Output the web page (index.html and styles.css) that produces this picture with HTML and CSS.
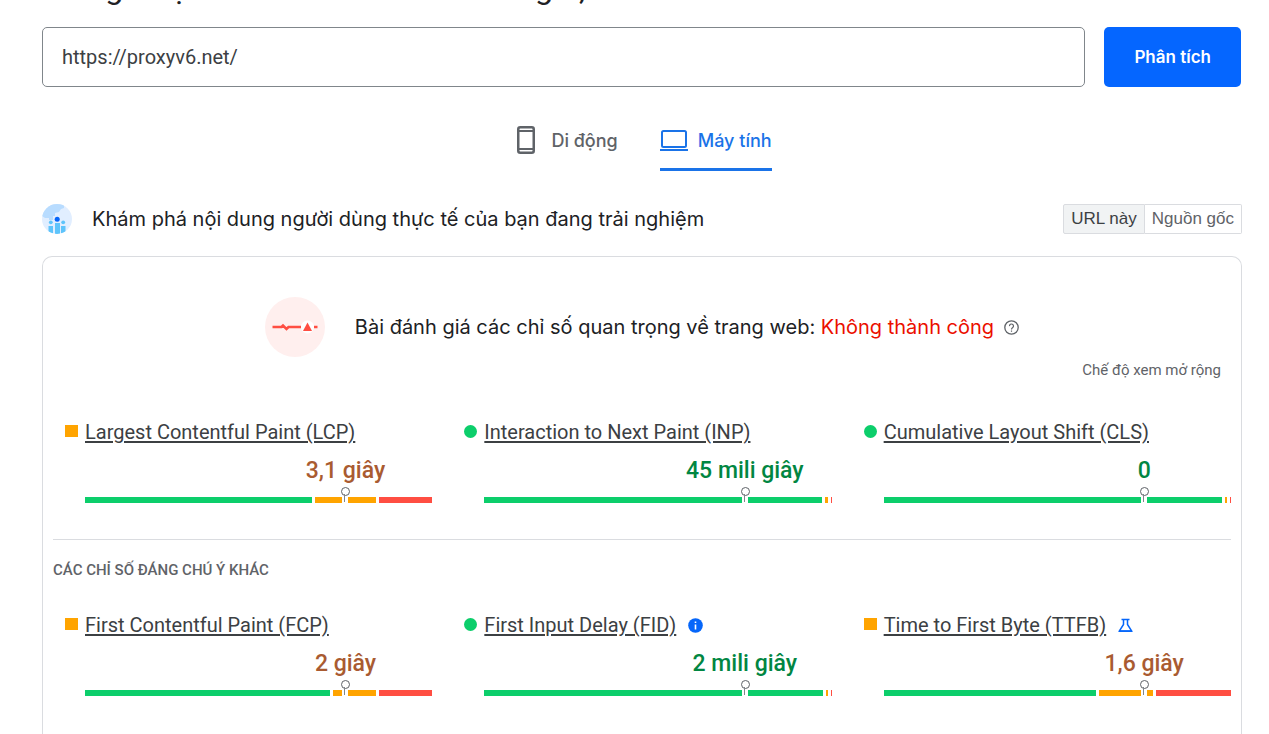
FILE: index.html
```html
<!DOCTYPE html>
<html lang="vi">
<head>
<meta charset="utf-8">
<meta name="viewport" content="width=device-width, initial-scale=1">
<title>PageSpeed Insights</title>
<link rel="stylesheet" href="styles.css">
</head>
<body>
<main class="page">
  <h1 class="report-title"><span>Trang được xem lúc 19:40:21 12 thg 9, 2023</span></h1>

  <form class="search">
    <input class="search-input" type="text" value="https://proxyv6.net/" aria-label="URL">
    <button class="search-button" type="button">Phân tích</button>
  </form>

  <nav class="tabs" role="tablist">
    <button class="tab" type="button" role="tab" aria-selected="false">
      <svg class="phone-icon" width="18" height="28" viewBox="0 0 18 28" fill="none" stroke="currentColor" aria-hidden="true">
        <rect x="1.25" y="1.25" width="15.500" height="25.500" rx="2" stroke-width="2.500"/>
        <path d="M1 5h16M1 23h16" stroke-width="2"/>
      </svg>
      <span>Di động</span>
    </button>
    <button class="tab tab-active" type="button" role="tab" aria-selected="true">
      <svg class="laptop-icon" width="28" height="22" viewBox="0 0 28 22" fill="none" stroke="currentColor" stroke-width="2" aria-hidden="true">
        <rect x="2" y="2" width="24" height="16" rx="1.500"/>
        <path d="M0 21h28"/>
      </svg>
      <span>Máy tính</span>
    </button>
  </nav>

  <section class="field-data">
    <header class="section-head">
      <svg class="users-icon" width="30" height="30" viewBox="0 0 30 30" aria-hidden="true">
        <defs><clipPath id="disc"><circle cx="15" cy="15" r="15"/></clipPath></defs>
        <g clip-path="url(#disc)">
          <rect width="30" height="30" fill="#e1eeff"/>
          <path d="M0 0h22v4l-3 1-2 3-4 1v3h-2v4H7v-2H3l-3-2z" fill="#b8dcff"/>
          <path d="M13 19h5v11h-5zM6.500 22h4.500v8H6.500zM19 22h4.500v8H19z" fill="#5ec4fb"/>
          <circle cx="8.800" cy="18.300" r="1.900" fill="#5ec4fb"/>
          <circle cx="21.200" cy="18.300" r="1.900" fill="#5ec4fb"/>
          <circle cx="15.200" cy="15.300" r="2.500" fill="#0566fa"/>
        </g>
      </svg>
      <h2 class="section-title">Khám phá nội dung người dùng thực tế của bạn đang trải nghiệm</h2>
      <div class="scope">
        <button class="scope-button scope-active" type="button">URL này</button>
        <button class="scope-button" type="button">Nguồn gốc</button>
      </div>
    </header>

    <div class="card">
      <div class="assessment">
        <svg class="pulse-icon" width="60" height="60" viewBox="0 0 60 60" aria-hidden="true">
          <circle cx="30" cy="30" r="30" fill="#ffefee"/>
          <path d="M7.500 30h9l1.500-1.500 3.500 3.500 2-2H36" fill="none" stroke="#ff4e42" stroke-width="2.500"/>
          <circle cx="42.500" cy="30" r="6.500" fill="#fff"/>
          <path d="M42.500 25.500L47 34h-9z" fill="#ff4e42"/>
          <path d="M49 30h3.500" stroke="#ff4e42" stroke-width="2.500"/>
        </svg>
        <p class="assessment-text">Bài đánh giá các chỉ số quan trọng về trang web: <span class="failed">Không thành công</span></p>
        <button class="icon-button" type="button" aria-label="Trợ giúp">
          <svg class="icon" width="15" height="15" viewBox="0 0 15 15" fill="none" stroke="#5f6368" aria-hidden="true">
            <circle cx="7.500" cy="7.500" r="6.700" stroke-width="1.300"/>
            <path d="M5.500 6.100a2 2 0 1 1 3.200 1.500c-.8.600-1.200.8-1.200 1.800M7.500 10.600v1.200" stroke-width="1.200"/>
          </svg>
        </button>
      </div>
      <div class="expand"><button class="expand-button" type="button">Chế độ xem mở rộng</button></div>

      <div class="metrics">
        <article class="metric average">
          <h3 class="metric-name"><i class="mark"></i><a class="metric-link" href="#lcp">Largest Contentful Paint (LCP)</a></h3>
          <div class="metric-value">3,1 giây</div>
          <div class="bar"><i class="good" style="flex-grow:227"></i><i class="fair" style="flex-grow:61"></i><i class="poor" style="flex-grow:53"></i><b class="pin"></b></div>
        </article>
        <article class="metric fast">
          <h3 class="metric-name"><i class="mark"></i><a class="metric-link" href="#inp">Interaction to Next Paint (INP)</a></h3>
          <div class="metric-value">45 mili giây</div>
          <div class="bar"><i class="good" style="flex-grow:338"></i><i class="fair" style="flex-grow:3"></i><i class="poor" style="flex-grow:1"></i><b class="pin"></b></div>
        </article>
        <article class="metric fast">
          <h3 class="metric-name"><i class="mark"></i><a class="metric-link" href="#cls">Cumulative Layout Shift (CLS)</a></h3>
          <div class="metric-value">0</div>
          <div class="bar"><i class="good" style="flex-grow:339"></i><i class="fair" style="flex-grow:2"></i><i class="poor" style="flex-grow:1"></i><b class="pin"></b></div>
        </article>
      </div>

      <h2 class="other-title">CÁC CHỈ SỐ ĐÁNG CHÚ Ý KHÁC</h2>

      <div class="metrics metrics-other">
        <article class="metric average">
          <h3 class="metric-name"><i class="mark"></i><a class="metric-link" href="#fcp">First Contentful Paint (FCP)</a></h3>
          <div class="metric-value">2 giây</div>
          <div class="bar"><i class="good" style="flex-grow:245"></i><i class="fair" style="flex-grow:43"></i><i class="poor" style="flex-grow:53"></i><b class="pin"></b></div>
        </article>
        <article class="metric fast">
          <h3 class="metric-name"><i class="mark"></i><a class="metric-link" href="#fid">First Input Delay (FID)</a>
            <svg class="icon" width="15" height="15" viewBox="0 0 15 15" role="img" aria-label="Thông tin">
              <circle cx="7.500" cy="7.500" r="7.300" fill="#0566fa"/>
              <path d="M7.500 3.400v1.700M7.500 6.400v5" stroke="#fff" stroke-width="1.600"/>
            </svg>
          </h3>
          <div class="metric-value">2 mili giây</div>
          <div class="bar"><i class="good" style="flex-grow:340"></i><i class="fair" style="flex-grow:2"></i><i class="poor" style="flex-grow:1"></i><b class="pin"></b></div>
        </article>
        <article class="metric average">
          <h3 class="metric-name"><i class="mark"></i><a class="metric-link" href="#ttfb">Time to First Byte (TTFB)</a>
            <svg class="icon" width="15" height="15" viewBox="0 0 15 15" fill="none" stroke="#0566fa" stroke-width="1.500" role="img" aria-label="Thử nghiệm">
              <path d="M3.500 1.500h8M5.500 1.500v5L1.300 13h12.400L9.500 6.500v-5"/>
              <path d="M1 13.200h13"/>
            </svg>
          </h3>
          <div class="metric-value">1,6 giây</div>
          <div class="bar"><i class="good" style="flex-grow:212"></i><i class="fair" style="flex-grow:54"></i><i class="poor" style="flex-grow:75"></i><b class="pin"></b></div>
        </article>
      </div>
    </div>
  </section>
</main>
</body>
</html>
```
FILE: styles.css
```css
* { box-sizing: border-box; }

body {
  margin: 0;
  background: #fff;
  color: #202124;
  font-family: Roboto, "Noto Sans", sans-serif;
}

h1, h2, h3, p { margin: 0; font-weight: 400; }
button { font: inherit; cursor: pointer; }
svg { flex: none; }

.page { padding: 0 27px 0 42px; }

/* Only the bottom of the heading is visible above the form */
.report-title {
  display: flex;
  align-items: flex-end;
  height: 8px;
  margin-bottom: 19px;
  font-size: 32px;
  line-height: 40px;
  white-space: nowrap;
}

.search { display: flex; gap: 19px; height: 60px; padding-right: 1px; }

.search-input {
  flex: 1;
  min-width: 0;
  padding: 0 19px;
  border: 1px solid #80868b;
  border-radius: 5px;
  background: #fff;
  color: #3c4043;
  font: 20px Roboto, sans-serif;
}

.search-button {
  padding: 0 30px;
  border: 0;
  border-radius: 5px;
  background: #0566ff;
  color: #fff;
  font: 600 17px Inter, sans-serif;
}

.tabs {
  display: flex;
  justify-content: center;
  gap: 42px;
  margin-top: 23px;
  padding-left: 5px;
}

.tab {
  display: flex;
  align-items: center;
  gap: 16px;
  height: 61px;
  padding: 2px 0 0;
  border: 0;
  border-bottom: 3px solid transparent;
  background: none;
  color: #5f6368;
  font: 500 18px Inter, sans-serif;
}

.tab-active {
  gap: 10px;
  border-bottom-color: #1a73e8;
  color: #1a73e8;
}

.section-head {
  display: flex;
  align-items: center;
  margin-top: 33px;
}

.section-title {
  flex: 1;
  margin-left: 20px;
  font: 400 20px/28px Inter, sans-serif;
}

.scope { display: flex; }

.scope-button {
  height: 30px;
  padding: 0 7px;
  border: 1px solid #dadce0;
  border-left: 0;
  border-radius: 0 2px 2px 0;
  background: #fff;
  color: #5f6368;
  font: 17px "Liberation Sans", Arial, sans-serif;
}

.scope-active {
  border-left: 1px solid #dadce0;
  border-radius: 2px 0 0 2px;
  background: #f1f3f4;
  color: #3c4043;
}

.card {
  margin-top: 22px;
  padding: 40px 10px 0;
  border: 1px solid #dadce0;
  border-bottom: 0;
  border-radius: 10px 10px 0 0;
}

.assessment {
  display: flex;
  align-items: center;
  justify-content: center;
}

.assessment-text {
  margin: 0 10px 0 30px;
  font: 400 20px/28px Inter, sans-serif;
}

.failed { color: #eb0f00; }

.icon-button {
  display: flex;
  padding: 0;
  border: 0;
  background: none;
}

.expand { display: flex; justify-content: flex-end; padding-right: 10px; }

.expand-button {
  padding: 0;
  border: 0;
  background: none;
  color: #5f6368;
  font-size: 15px;
  line-height: 26px;
}

.metrics {
  display: grid;
  grid-template-columns: repeat(3, 1fr);
  gap: 32px;
  padding: 34px 0 36px 12px;
}

.metrics-other { padding: 30px 0 38px 12px; }

.metric-name {
  display: flex;
  align-items: center;
  height: 30px;
  font-size: 20px;
}

.metric-name .icon { margin-left: 12px; }

.mark {
  width: 13px;
  height: 12px;
  margin: 0 7px 2px 0;
  background: #ffa400;
}

.fast .mark { height: 13px; border-radius: 50%; background: #0cce6b; }

.metric-link {
  color: #3c4043;
  text-decoration: underline;
  text-decoration-thickness: 2px;
  text-underline-offset: 2px;
}

/* The value is centred on the 75th percentile */
.metric-value {
  margin-left: 50%;
  padding-left: 10px;
  color: #a95b31;
  font-size: 23px;
  font-weight: 500;
  line-height: 48px;
  text-align: center;
}

.fast .metric-value { color: #018642; }

.bar {
  position: relative;
  display: flex;
  gap: 3px;
  height: 6px;
  margin-left: 20px;
  margin-top: 2px;
}

.bar i { flex: 0 0 0; }
.good { background: #0cce6b; }
.fair { background: #ffa400; }
.poor { background: #ff4e42; }

.pin {
  position: absolute;
  top: 0;
  left: 75%;
  width: 6px;
  height: 6px;
  margin-left: -3px;
  background: #fff;
}

.pin::before {
  content: "";
  position: absolute;
  top: -10px;
  left: -1px;
  width: 7px;
  height: 7px;
  border: 1px solid #5f6368;
  border-radius: 50%;
  background: #fff;
}

.pin::after {
  content: "";
  position: absolute;
  top: -3px;
  left: 2px;
  width: 1px;
  height: 8px;
  background: #80868b;
}

.other-title {
  padding-top: 20px;
  border-top: 1px solid #dadce0;
  color: #5f6368;
  font-size: 15px;
  font-weight: 500;
  line-height: 20px;
}
```
